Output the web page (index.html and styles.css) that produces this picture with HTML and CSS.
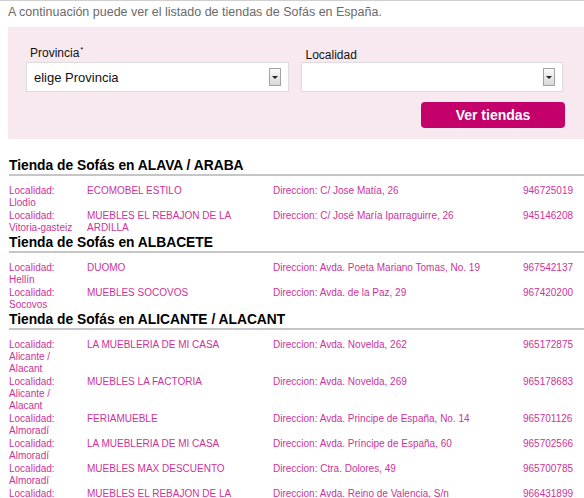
FILE: index.html
```html
<!DOCTYPE html>
<html lang="es">
<head>
<meta charset="utf-8">
<title>Tiendas de Sofás en España</title>
<link rel="stylesheet" href="styles.css">
</head>
<body>
<div class="page">
  <p class="intro">A continuación puede ver el listado de tiendas de Sofás en España.</p>

  <form class="search">
    <div class="fields">
      <div class="field">
        <div class="label-box"><span class="label">Provincia<sup>*</sup></span></div>
        <div class="select"><span class="select-text">elige Provincia</span><span class="arrow"><i></i></span></div>
      </div>
      <div class="field">
        <div class="label-box low"><span class="label">Localidad</span></div>
        <div class="select"><span class="select-text"></span><span class="arrow"><i></i></span></div>
      </div>
    </div>
    <div class="actions"><button type="button" class="btn">Ver tiendas</button></div>
  </form>

  <section class="group">
    <h2 class="group-title">Tienda de Sofás en ALAVA / ARABA</h2>
    <div class="row"><div class="loc"><span class="lbl">Localidad:</span>Llodio</div><div class="name">ECOMOBEL ESTILO</div><div class="dir">Direccion: C/ Jose Matía, 26</div><div class="tel">946725019</div></div>
    <div class="row"><div class="loc"><span class="lbl">Localidad:</span>Vitoria-gasteiz</div><div class="name">MUEBLES EL REBAJON DE LA ARDILLA</div><div class="dir">Direccion: C/ José María Iparraguirre, 26</div><div class="tel">945146208</div></div>
  </section>

  <section class="group">
    <h2 class="group-title">Tienda de Sofás en ALBACETE</h2>
    <div class="row"><div class="loc"><span class="lbl">Localidad:</span>Hellín</div><div class="name">DUOMO</div><div class="dir">Direccion: Avda. Poeta Mariano Tomas, No. 19</div><div class="tel">967542137</div></div>
    <div class="row"><div class="loc"><span class="lbl">Localidad:</span>Socovos</div><div class="name">MUEBLES SOCOVOS</div><div class="dir">Direccion: Avda. de la Paz, 29</div><div class="tel">967420200</div></div>
  </section>

  <section class="group">
    <h2 class="group-title">Tienda de Sofás en ALICANTE / ALACANT</h2>
    <div class="row"><div class="loc"><span class="lbl">Localidad:</span>Alicante / Alacant</div><div class="name">LA MUEBLERIA DE MI CASA</div><div class="dir">Direccion: Avda. Novelda, 262</div><div class="tel">965172875</div></div>
    <div class="row"><div class="loc"><span class="lbl">Localidad:</span>Alicante / Alacant</div><div class="name">MUEBLES LA FACTORIA</div><div class="dir">Direccion: Avda. Novelda, 269</div><div class="tel">965178683</div></div>
    <div class="row"><div class="loc"><span class="lbl">Localidad:</span>Almoradí</div><div class="name">FERIAMUEBLE</div><div class="dir">Direccion: Avda. Principe de España, No. 14</div><div class="tel">965701126</div></div>
    <div class="row"><div class="loc"><span class="lbl">Localidad:</span>Almoradí</div><div class="name">LA MUEBLERIA DE MI CASA</div><div class="dir">Direccion: Avda. Príncipe de España, 60</div><div class="tel">965702566</div></div>
    <div class="row"><div class="loc"><span class="lbl">Localidad:</span>Almoradí</div><div class="name">MUEBLES MAX DESCUENTO</div><div class="dir">Direccion: Ctra. Dolores, 49</div><div class="tel">965700785</div></div>
    <div class="row"><div class="loc"><span class="lbl">Localidad:</span>Almoradí</div><div class="name">MUEBLES EL REBAJON DE LA ARDILLA</div><div class="dir">Direccion: Avda. Reino de Valencia, S/n</div><div class="tel">966431899</div></div>
  </section>
</div>
</body>
</html>
```

FILE: styles.css
```css
html {
  overflow: hidden;
}

body {
  margin: 0;
  background: #ffffff;
  font-family: "Liberation Sans", Arial, sans-serif;
  color: #000;
}

.page {
  border-top: 1px solid #cfcfcf;
  padding-left: 8px;
}

.intro {
  margin: 0;
  padding-top: 4px;
  font-size: 12.5px;
  line-height: 14px;
  color: #6a6a6a;
}

.search {
  margin: 8px 0 0 0;
  background: #f8e9f1;
  padding: 19px 21px 11px 18px;
}

.fields {
  display: grid;
  grid-template-columns: 1fr 1fr;
  column-gap: 12px;
}

.field {
  display: flex;
  flex-direction: column;
}

.label-box {
  height: 16px;
  display: flex;
  align-items: flex-start;
  padding-left: 4px;
}

.label-box.low {
  align-items: flex-end;
  padding-left: 5px;
}

.label {
  font-size: 12px;
  line-height: 14px;
  color: #111;
}

.label-box.low .label {
  line-height: 13px;
}

.label sup {
  font-size: 8px;
  line-height: 0;
  vertical-align: 5px;
  margin-left: 1px;
}

.select {
  height: 30px;
  box-sizing: border-box;
  border: 1px solid #dedbdd;
  background: #fff;
  display: flex;
  align-items: center;
  padding: 0 7px 0 7px;
}

.select-text {
  flex: 1;
  font-size: 13px;
  color: #111;
}

.arrow {
  width: 12px;
  height: 18px;
  box-sizing: border-box;
  border: 1px solid #a3a3a3;
  background: linear-gradient(#fbfbfb, #d8d8d8);
  display: flex;
  align-items: center;
  justify-content: center;
}

.arrow i {
  display: block;
  width: 0;
  height: 0;
  border-left: 3px solid transparent;
  border-right: 3px solid transparent;
  border-top: 3px solid #222;
}

.actions {
  display: flex;
  justify-content: flex-end;
  margin-top: 10px;
}

.btn {
  width: 144px;
  height: 26px;
  border: none;
  border-radius: 4px;
  background: #c4006b;
  color: #fff;
  font-family: "Liberation Sans", Arial, sans-serif;
  font-weight: bold;
  font-size: 14px;
  padding: 0;
  margin-right: -2px;
}

.group {
  margin-left: 1px;
}

.search + .group {
  margin-top: 19px;
}

.group-title {
  margin: 0 0 9px 0;
  font-size: 13.8px;
  line-height: 16px;
  font-weight: bold;
  color: #000;
  border-bottom: 2px solid #c6c6c6;
}

.row {
  display: grid;
  grid-template-columns: 78px 186px 250px 1fr;
  font-size: 10px;
  line-height: 12px;
  color: #cc3399;
  margin-bottom: 1px;
}

.loc {
  max-width: 68px;
}

.lbl {
  display: block;
}

.name {
  padding-right: 10px;
}
```
